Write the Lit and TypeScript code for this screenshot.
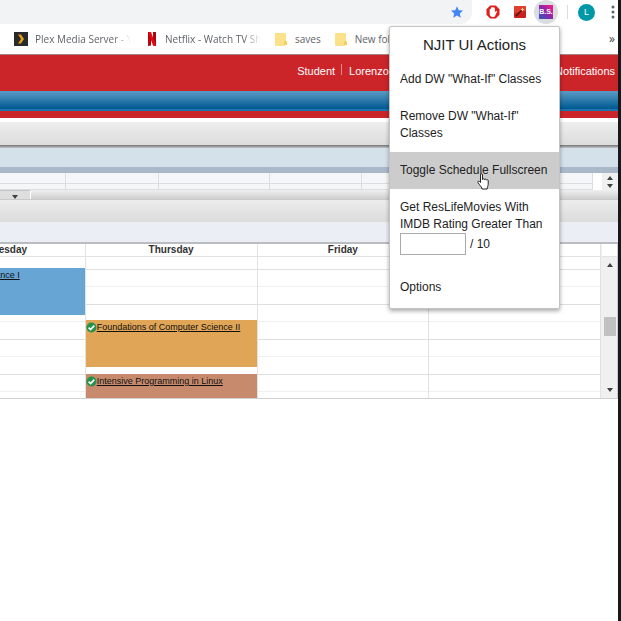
import { LitElement, html, css, svg } from "lit";
import { customElement, property } from "lit/decorators.js";

const folder = html`<svg class="ico" width="12" height="13" viewBox="0 0 12 13">
  <path d="M1 0h9a1 1 0 0 1 1 1v7l1 1v3H10l-1 1H1a1 1 0 0 1-1-1V1a1 1 0 0 1 1-1z" fill="#fbe28a"/>
  <path d="M9 13V9l1-1h1l1 1v3h-2z" fill="#f3cf5c"/></svg>`;

const check = html`<svg class="check" width="11" height="11" viewBox="0 0 11 11">
  <circle cx="5.500" cy="5.500" r="5" fill="#23924a"/>
  <path d="M2.600 5.600l2 2 3.700-4" fill="none" stroke="#fff" stroke-width="1.600"/></svg>`;

const arrow = (up: boolean) => html`<svg class="arrow" width="6" height="4" viewBox="0 0 6 4">
  ${up ? svg`<path d="M0 4L3 0l3 4z" fill="#404040"/>` : svg`<path d="M0 0l3 4 3-4z" fill="#404040"/>`}</svg>`;

@customElement("browser-bar")
export class BrowserBar extends LitElement {
  static styles = css`
    :host { display: block; background: #fff; }
    * { box-sizing: border-box; }
    button { border: 0; padding: 0; background: none; display: flex; align-items: center; justify-content: center; }
    .tools { display: flex; height: 24px; align-items: center; }
    .omni { flex: 1; height: 24px; background: #f1f3f4; border-radius: 0 0 12px 0; display: flex; justify-content: flex-end; align-items: center; padding-right: 9px; }
    .exts { display: flex; align-items: center; width: 146px; flex: none; height: 24px; }
    .ext { width: 27px; height: 24px; flex: none; }
    .first { margin-left: 7px; }
    .active { width: 24px; border-radius: 50%; background: #dadce0; margin-left: 1px; }
    .badge { width: 14px; height: 14px; background: linear-gradient(45deg, #3f51b5 10%, #8e24aa 50%, #e91e8c 90%); color: #fff; font: bold 7px/14px "Liberation Sans", Arial, sans-serif; }
    .sep { width: 1px; height: 14px; background: #dadce0; margin: 0 10px 0 9px; flex: none; }
    .avatar { width: 17px; height: 17px; border-radius: 50%; background: #0097a7; color: #fff; font: 9px/17px "Liberation Sans", Arial, sans-serif; flex: none; }
    .more { flex: 1; padding-left: 12px; }
    .marks { display: flex; align-items: center; height: 30px; font: 10px/16px "Open Sans", "Noto Sans", sans-serif; color: #5f6368; white-space: nowrap; overflow: hidden; }
    .marks a { color: inherit; text-decoration: none; display: flex; align-items: center; flex: none; gap: 8px; }
    .marks a svg { flex: none; }
    .fade { overflow: hidden; width: 96px; -webkit-mask-image: linear-gradient(90deg, #000 82%, transparent); mask-image: linear-gradient(90deg, #000 82%, transparent); }
    .marks .plex { margin-left: 14px; gap: 7px; }
    .netflix { margin-left: 16px; }
    .saves, .newf { margin-left: 14px; }
    .overflow { margin-left: auto; padding-right: 3px; color: #3c4043; font: 12px/16px "Open Sans", sans-serif; }
  `;
  render() {
    return html`
      <div class="tools">
        <div class="omni">
          <button aria-label="Bookmark this page"><svg width="12" height="12" viewBox="0 0 24 24"><path d="M12 .5l3.500 7.900 8.500.8-6.400 5.700 1.900 8.500L12 19l-7.500 4.400 1.900-8.500L0 9.200l8.500-.8z" fill="#4285f4"/></svg></button>
        </div>
        <div class="exts">
          <button class="ext first" aria-label="Ad blocker"><svg width="14" height="14" viewBox="0 0 14 14">
            <path d="M4.200.5h5.600l3.700 3.700v5.600l-3.700 3.700H4.200L.5 9.800V4.200z" fill="#e0201c"/>
            <path d="M3.700 7V4.300c0-.9 1.300-.9 1.300 0V3c0-.9 1.300-.9 1.300 0v-.4c0-.9 1.300-.9 1.300 0V3c0-.8 1.300-.8 1.300 0v4.300l.9-1.100c.6-.6 1.500 0 1.100.7L9.300 10.500c-.5 1-1 1.500-2.200 1.500-2.200 0-3.400-1.200-3.400-3z" fill="#fff"/></svg></button>
          <button class="ext" aria-label="Wand"><svg width="12" height="12" viewBox="0 0 12 12">
            <rect width="12" height="12" rx="1" fill="#c9211d"/><path d="M0 1a1 1 0 0 1 1-1h10a1 1 0 0 1 1 1v4L0 7z" fill="#e0402d"/>
            <path d="M2 10l5.500-5.500" stroke="#4a1410" stroke-width="1.500"/><path d="M8.500 1.500l.6 1.400 1.400.6-1.400.6-.6 1.400-.6-1.400-1.400-.6 1.400-.6z" fill="#ffe9a0"/></svg></button>
          <button class="ext active" aria-label="NJIT UI Actions"><span class="badge">B.S.</span></button>
          <span class="sep"></span>
          <button class="avatar" aria-label="Profile">L</button>
          <button class="more" aria-label="Menu"><svg width="4" height="14" viewBox="0 0 4 14"><g fill="#5f6368"><circle cx="2" cy="2" r="1.500"/><circle cx="2" cy="7" r="1.500"/><circle cx="2" cy="12" r="1.500"/></g></svg></button>
        </div>
      </div>
      <nav class="marks">
        <a class="plex" href="#"><svg width="14" height="14" viewBox="0 0 14 14"><rect width="14" height="14" fill="#282a2d"/><path d="M4 2.500h3L10 7l-3 4.500H4L7 7z" fill="#e5a00d"/></svg><span class="fade">Plex Media Server - Yo</span></a>
        <a class="netflix" href="#"><svg width="10" height="14" viewBox="0 0 10 14"><path d="M1 0h3v13.500L1 14zM6 0h3v14l-3-.5z" fill="#b1060f"/><path d="M1 0h3l5 14-3-.5z" fill="#e50914"/></svg><span class="fade">Netflix - Watch TV Sh</span></a>
        <a class="saves" href="#">${folder}<span>saves</span></a>
        <a class="newf" href="#">${folder}<span>New folder</span></a>
        <button class="overflow" aria-label="More bookmarks">»</button>
      </nav>`;
  }
}

@customElement("week-table")
export class WeekTable extends LitElement {
  @property({ attribute: false }) days = ["Wednesday", "Thursday", "Friday", ""];
  static styles = css`
    :host { display: flex; height: 155px; border-bottom: 1px solid #d0d0d0; overflow: hidden; background: #fff; font: 9px/11px "Liberation Sans", Arial, sans-serif; }
    * { box-sizing: border-box; }
    table { flex: 1; border-collapse: separate; border-spacing: 0; table-layout: fixed; width: 100%; height: 155px; margin-left: -86px; }
    th { height: 13px; padding: 0; font: bold 10px/12px "Liberation Sans", Arial, sans-serif; color: #333; border-right: 1px solid #e4e4e4; border-bottom: 1px solid #e2e2e2; }
    td { padding: 11px 0 0; vertical-align: top; border-right: 1px solid #e2e2e2;
      background: repeating-linear-gradient(#dfdfdf 0 1px, transparent 1px 17px, #f0f0f0 17px 18px, transparent 18px 35px) 0 12px no-repeat; }
    .event { height: 47px; padding: 2px 0 0; display: flex; align-items: flex-start; white-space: nowrap; }
    .event a { color: #111; }
    .check { flex: none; }
    .blue { background: #66a5d4; justify-content: flex-end; padding-right: 65px; }
    .gold { background: #e0a557; margin-top: 52px; }
    .clay { background: #c78a6c; margin-top: 7px; height: 25px; }
    .bar { width: 17px; flex: none; display: flex; flex-direction: column; align-items: center; padding-left: 1px; background: #f0f0f0; border-right: 1px solid #c5ced8; }
    .cap { height: 13px; width: 100%; background: #fff; border-bottom: 1px solid #e2e2e2; flex: none; }
    .up { margin-top: 6px; }
    .thumb { width: 12px; height: 19px; margin-top: 50px; background: #c1c1c1; }
    .down { margin-top: auto; margin-bottom: 6px; }
    .arrow { display: block; }
  `;
  private events(day: string) {
    if (day === "Wednesday") return html`<div class="event blue"><a href="#">Finance I</a></div>`;
    if (day === "Thursday") return html`
      <div class="event gold">${check}<a href="#">Foundations of Computer Science II</a></div>
      <div class="event clay">${check}<a href="#">Intensive Programming in Linux</a></div>`;
    return "";
  }
  render() {
    return html`
      <table>
        <thead><tr>${this.days.map((d) => html`<th>${d}</th>`)}</tr></thead>
        <tbody><tr>${this.days.map((d) => html`<td>${this.events(d)}</td>`)}</tr></tbody>
      </table>
      <div class="bar"><div class="cap"></div><div class="up">${arrow(true)}</div><div class="thumb"></div><div class="down">${arrow(false)}</div></div>`;
  }
}

@customElement("actions-popup")
export class ActionsPopup extends LitElement {
  static styles = css`
    :host { display: block; background: #fff; border: 1px solid #c4c4c4; border-radius: 2px; box-shadow: 0 2px 4px rgba(0, 0, 0, .35); color: #222; font: 12px/17px "Liberation Sans", Arial, sans-serif; padding-bottom: 2px; }
    * { box-sizing: border-box; }
    h1 { margin: 0; padding: 8px 0 7px; font-weight: 400; font-size: 15px; line-height: 19px; text-align: center; }
    button, .item { display: block; width: 100%; border: 0; background: none; margin: 0; padding: 10px; text-align: left; font: inherit; color: inherit; }
    .hover { background: #ccc; }
    .rate { padding-bottom: 14px; }
    .row { display: flex; align-items: center; gap: 4px; }
    input { width: 66px; height: 22px; border: 1px solid #aaa; background: #fff; padding: 0 3px; font: inherit; }
    label { display: block; }
  `;
  render() {
    return html`
      <h1>NJIT UI Actions</h1>
      <button>Add DW "What-If" Classes</button>
      <button>Remove DW "What-If"<br>Classes</button>
      <button class="hover">Toggle Schedule Fullscreen</button>
      <div class="item rate"><label for="r">Get ResLifeMovies With<br>IMDB Rating Greater Than</label>
        <div class="row"><input id="r" type="text"><span>/ 10</span></div></div>
      <button>Options</button>`;
  }
}

@customElement("app-root")
export class AppRoot extends LitElement {
  static styles = css`
    :host { display: block; position: relative; min-height: 100vh; overflow: hidden; background: #fff; border-right: 3px solid #16181b; box-sizing: border-box; font-family: "Liberation Sans", Arial, sans-serif; }
    * { box-sizing: border-box; }
    .red { height: 64px; background: #cc2529; border-top: 1px solid #a98484; display: flex; flex-direction: column; }
    .links { height: 36px; display: flex; justify-content: flex-end; align-items: flex-start; padding: 8px 3px 0 0; font-size: 11px; line-height: 16px; }
    .links a { color: #fff; text-decoration: none; white-space: nowrap; }
    .divider { width: 1px; height: 11px; background: #e58a8c; margin: 1px 7px 0 6px; }
    .name { width: 206px; }
    .blue { height: 20px; background: linear-gradient(#5c9bc4, #005a93 88%, #1c75ad 92%); }
    .grey { margin-top: 4px; height: 23px; background: linear-gradient(#eee, #dcdcdc); }
    .rule { height: 3px; background: linear-gradient(#777, #999, #c0c8d0); }
    .pale { height: 19px; background: #d5e1ea; }
    .steel { height: 6px; background: #a9b9ca; }
    .list { height: 17px; display: flex; background: #fff; }
    .cells { flex: 1; display: grid; grid-template-columns: 66px 93px 111px 92px 1fr; grid-template-rows: 11px 6px; background: #f5f6f8; }
    .cells span { border-right: 1px solid #dcdde0; border-bottom: 1px solid #dcdde0; }
    .spin { width: 25px; display: flex; flex-direction: column; align-items: flex-end; gap: 4px; padding: 3px 5px 0 0; background: linear-gradient(90deg, #fff 9px, #f0f0f0 9px); }
    .arrow { display: block; }
    .split { height: 10px; background: linear-gradient(#efefef, #cfcfcf); border-bottom: 1px solid #c9c9c9; }
    .tab { width: 31px; height: 9px; padding: 4px 0 0 12px; border-top: 1px solid #c6c6c6; border-right: 1px solid #fff; background: #dedede; }
    .grey2 { height: 22px; background: linear-gradient(#ececec, #dcdcdc); }
    .ice { height: 22px; background: #ebeff5; border-bottom: 2px solid #b9bdc1; }
    actions-popup { position: absolute; top: 26px; right: 58px; width: 171px; z-index: 2; }
    .cursor { position: absolute; top: 173px; right: 128px; z-index: 3; }
  `;
  render() {
    return html`
      <browser-bar></browser-bar>
      <header class="red">
        <div class="links"><a href="#">Student</a><span class="divider"></span><a class="name" href="#">Lorenzo</a><a href="#">Notifications</a></div>
        <div class="blue"></div>
      </header>
      <div class="grey"></div><div class="rule"></div><div class="pale"></div><div class="steel"></div>
      <div class="list"><div class="cells">${Array.from({ length: 10 }, () => html`<span></span>`)}</div><div class="spin">${arrow(true)}${arrow(false)}</div></div>
      <div class="split"><div class="tab">${arrow(false)}</div></div>
      <div class="grey2"></div><div class="ice"></div>
      <week-table></week-table>
      <actions-popup></actions-popup>
      <svg class="cursor" width="13" height="17" viewBox="0 0 13 17"><path d="M3.500 9.500V2c0-1.700 2-1.700 2 0v4.500c0-1 1.800-1 1.900.2 0-1 1.800-.9 1.900.4.100-.8 1.900-.7 1.900.6v3.800c0 1.300-1 2-1 4.500H5c0-1.500-1.500-2.700-2.500-4.300L1 9.500c-.6-1.200.8-1.800 1.500-1z" fill="#fff" stroke="#222" stroke-width="1"/></svg>`;
  }
}
